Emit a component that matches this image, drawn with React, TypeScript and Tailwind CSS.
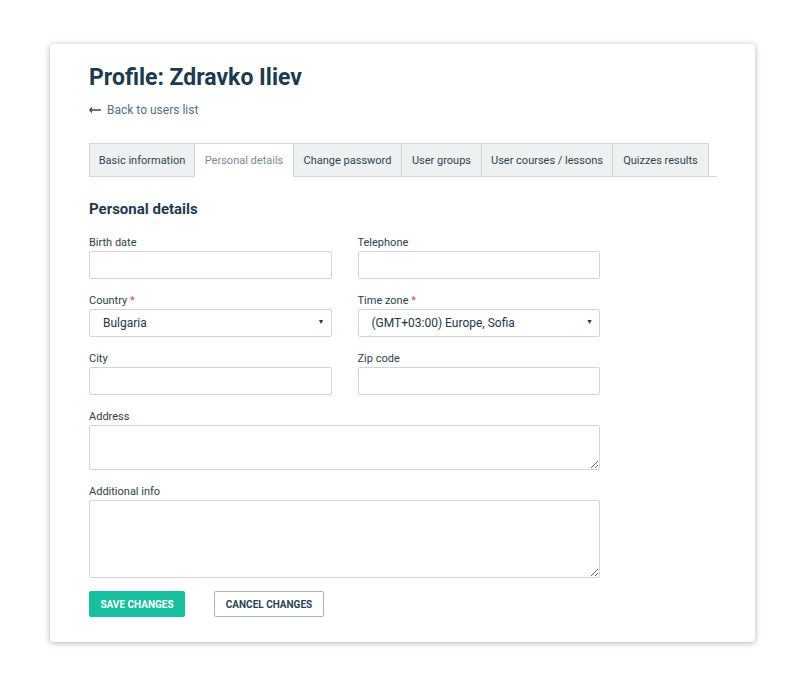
import React from 'react';

const tabs = [
  { label: 'Basic information', w: 'w-[106px]' },
  { label: 'Personal details', w: 'w-[99px]', active: true },
  { label: 'Change password', w: 'w-[108px]' },
  { label: 'User groups', w: 'w-[80px]' },
  { label: 'User courses / lessons', w: 'w-[131px]' },
  { label: 'Quizzes results', w: 'w-[96px]' },
];

function Label({ text, required }: { text: string; required?: boolean }) {
  return (
    <label className="block text-[11px] leading-[14px] text-[#2b3e4c] mb-[1px]">
      {text}
      {required && <span className="text-[#e0474c]"> *</span>}
    </label>
  );
}

function Field({ label, required }: { label: string; required?: boolean }) {
  return (
    <div>
      <Label text={label} required={required} />
      <input
        type="text"
        className="block w-full h-[28px] border border-[#d2d6d8] rounded-[2px] px-[12px] text-[12px] outline-none"
      />
    </div>
  );
}

function Select({ label, value }: { label: string; value: string }) {
  return (
    <div>
      <Label text={label} required />
      <div className="relative">
        <select
          defaultValue={value}
          className="block w-full h-[28px] appearance-none border border-[#d2d6d8] rounded-[2px] pl-[13px] pr-[20px] text-[12px] text-[#233746] bg-white outline-none"
        >
          <option>{value}</option>
        </select>
        <span className="pointer-events-none absolute right-[7px] top-[10px] text-[7px] leading-none text-[#1d3b4f]">
          ▼
        </span>
      </div>
    </div>
  );
}

export default function App() {
  return (
    <div
      className="min-h-[687px] bg-white pt-[44px] pl-[50px]"
      style={{ fontFamily: 'Roboto, "Liberation Sans", sans-serif' }}
    >
      <div className="w-[705px] rounded-[4px] bg-white shadow-[0_1px_6px_rgba(0,0,0,0.3)] pl-[39px] pt-[19px] pb-[25px]">
        <h1 className="text-[23px] leading-[30px] font-bold text-[#1d3b4f]">Profile: Zdravko Iliev</h1>

        <a className="mt-[10px] flex items-center gap-[6px] text-[12px] leading-[14px] text-[#4f7189]">
          <svg width="12" height="6" viewBox="0 0 12 6" fill="none">
            <path d="M3 0.5L0.8 3L3 5.5M1 3H12" stroke="#2f5168" strokeWidth="1.3" />
          </svg>
          Back to users list
        </a>

        <div className="mt-[26px] flex w-[628px] border-b border-[#cfd6d8]">
          {tabs.map((t) => (
            <div
              key={t.label}
              className={`${t.w} h-[34px] -mb-[1px] flex items-center justify-center pt-[2px] border border-l-0 first:border-l border-[#cfd6d8] text-[11px] ${
                t.active ? 'bg-white border-b-white text-[#7b8a94]' : 'bg-[#edf1f1] text-[#2b4557]'
              }`}
            >
              {t.label}
            </div>
          ))}
        </div>

        <h2 className="mt-[22px] text-[15px] leading-[20px] font-bold text-[#1d3b4f]">Personal details</h2>

        <div className="mt-[17px] w-[511px] grid grid-cols-2 gap-x-[26px] gap-y-[15px]">
          <Field label="Birth date" />
          <Field label="Telephone" />
          <Select label="Country" value="Bulgaria" />
          <Select label="Time zone" value="(GMT+03:00) Europe, Sofia" />
          <Field label="City" />
          <Field label="Zip code" />
          <div className="col-span-2">
            <Label text="Address" />
            <textarea className="block w-full h-[45px] border border-[#d2d6d8] rounded-[2px] outline-none" />
          </div>
          <div className="col-span-2">
            <Label text="Additional info" />
            <textarea className="block w-full h-[78px] border border-[#d2d6d8] rounded-[2px] outline-none" />
          </div>
        </div>

        <div className="mt-[13px] flex gap-[29px]">
          <button className="w-[96px] h-[26px] rounded-[2px] bg-[#17bf9e] text-white text-[10px] font-bold">
            SAVE CHANGES
          </button>
          <button className="w-[110px] h-[26px] rounded-[2px] border-[1.5px] border-[#a9b4bc] bg-white text-[#2c4256] text-[10px] font-bold">
            CANCEL CHANGES
          </button>
        </div>
      </div>
    </div>
  );
}
